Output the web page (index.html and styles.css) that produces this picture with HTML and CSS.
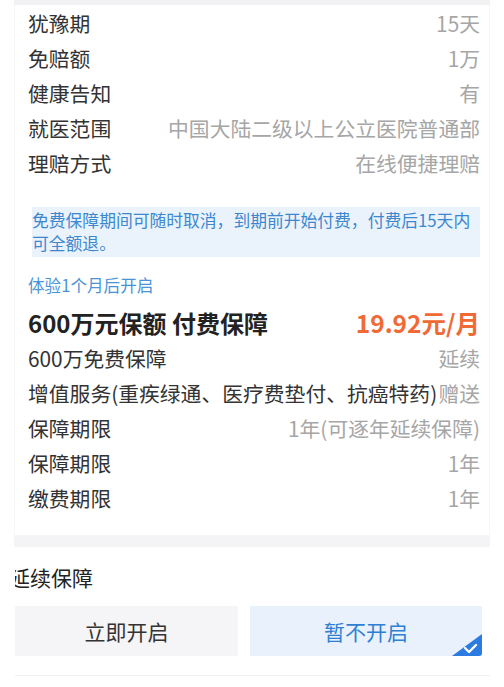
FILE: index.html
```html
<!DOCTYPE html>
<html lang="zh-CN">
<head>
<meta charset="utf-8">
<title>保障详情</title>
<link rel="stylesheet" href="styles.css">
</head>
<body>
<div class="page">
  <div class="strip"></div>
  <div class="card">
    <div class="row"><span class="label">犹豫期</span><span class="value">15天</span></div>
    <div class="row"><span class="label">免赔额</span><span class="value">1万</span></div>
    <div class="row"><span class="label">健康告知</span><span class="value">有</span></div>
    <div class="row"><span class="label">就医范围</span><span class="value">中国大陆二级以上公立医院普通部</span></div>
    <div class="row"><span class="label">理赔方式</span><span class="value">在线便捷理赔</span></div>

    <div class="notice">免费保障期间可随时取消，到期前开始付费，付费后15天内可全额退。</div>

    <div class="sub">体验1个月后开启</div>
    <div class="title-row"><span class="title">600万元保额 付费保障</span><span class="price">19.92元/月</span></div>
    <div class="row"><span class="label">600万免费保障</span><span class="value">延续</span></div>
    <div class="row"><span class="label">增值服务(重疾绿通、医疗费垫付、抗癌特药)</span><span class="value">赠送</span></div>
    <div class="row"><span class="label">保障期限</span><span class="value">1年(可逐年延续保障)</span></div>
    <div class="row"><span class="label">保障期限</span><span class="value">1年</span></div>
    <div class="row"><span class="label">缴费期限</span><span class="value">1年</span></div>
  </div>
  <div class="band"></div>
  <div class="section">
    <div class="section-title">延续保障</div>
    <div class="options">
      <div class="opt">立即开启</div>
      <div class="opt selected">暂不开启
        <span class="check"><svg width="30" height="22" viewBox="0 0 30 22"><path d="M30 0 V19 Q30 22 27 22 H0 Z" fill="#2c7be0"/><path d="M13 14 L17 18 L24 11" fill="none" stroke="#fff" stroke-width="2.4" stroke-linecap="round" stroke-linejoin="round"/></svg></span>
      </div>
    </div>
  </div>
  <div class="line"></div>
</div>
</body>
</html>
```
FILE: styles.css
```css
html, body {
  margin: 0;
  padding: 0;
  background: #ffffff;
}
.page {
  width: 504px;
  height: 687px;
  overflow: hidden;
  font-family: "Noto Sans CJK SC", "Noto Sans", sans-serif;
  color: #333;
}
.strip {
  height: 5px;
  margin: 0 14px;
  background: #f2f2f4;
}
.card {
  margin: 0 14px;
  padding: 0 9px 20px 13px;
  border-left: 1px solid #f7f7f8;
  border-right: 1px solid #f7f7f8;
}
.row {
  height: 35px;
  display: flex;
  justify-content: space-between;
  align-items: center;
  font-size: 20.8px;
  white-space: nowrap;
}
.label {
  color: #333;
}
.value {
  color: #a6a6a6;
}
.notice {
  margin: 27px 0 0 4px;
  padding: 2px 0;
  background: #eaf3fc;
  color: #3d87cf;
  font-size: 16.8px;
  line-height: 23px;
}
.sub {
  margin-top: 14px;
  height: 28px;
  line-height: 28px;
  font-size: 16.6px;
  color: #4a93d6;
}
.title-row {
  padding-top: 5px;
  height: 36px;
  display: flex;
  justify-content: space-between;
  align-items: center;
  white-space: nowrap;
}
.title {
  font-size: 24px;
  font-weight: 700;
  color: #222;
}
.price {
  font-size: 24.5px;
  font-weight: 700;
  color: #f06a36;
}
.band {
  height: 12px;
  margin: 0 14px;
  background: #f4f4f7;
}
.section {
  margin: 0 22px 0 15px;
  overflow: hidden;
}
.section-title {
  margin-top: 15px;
  margin-left: -6px;
  height: 30px;
  line-height: 30px;
  font-size: 21px;
  color: #222;
}
.options {
  margin-top: 14px;
  display: grid;
  grid-template-columns: 223px 232px;
  column-gap: 12px;
}
.opt {
  position: relative;
  height: 50px;
  display: flex;
  align-items: center;
  justify-content: center;
  font-size: 21px;
  background: #f5f4f6;
  color: #333;
}
.opt.selected {
  background: #e8f1fc;
  color: #2f80d2;
}
.check {
  position: absolute;
  right: 0;
  bottom: 0;
  width: 30px;
  height: 22px;
  line-height: 0;
}
.line {
  height: 1px;
  margin: 19px 14px 0 15px;
  background: #efeff1;
}
```
